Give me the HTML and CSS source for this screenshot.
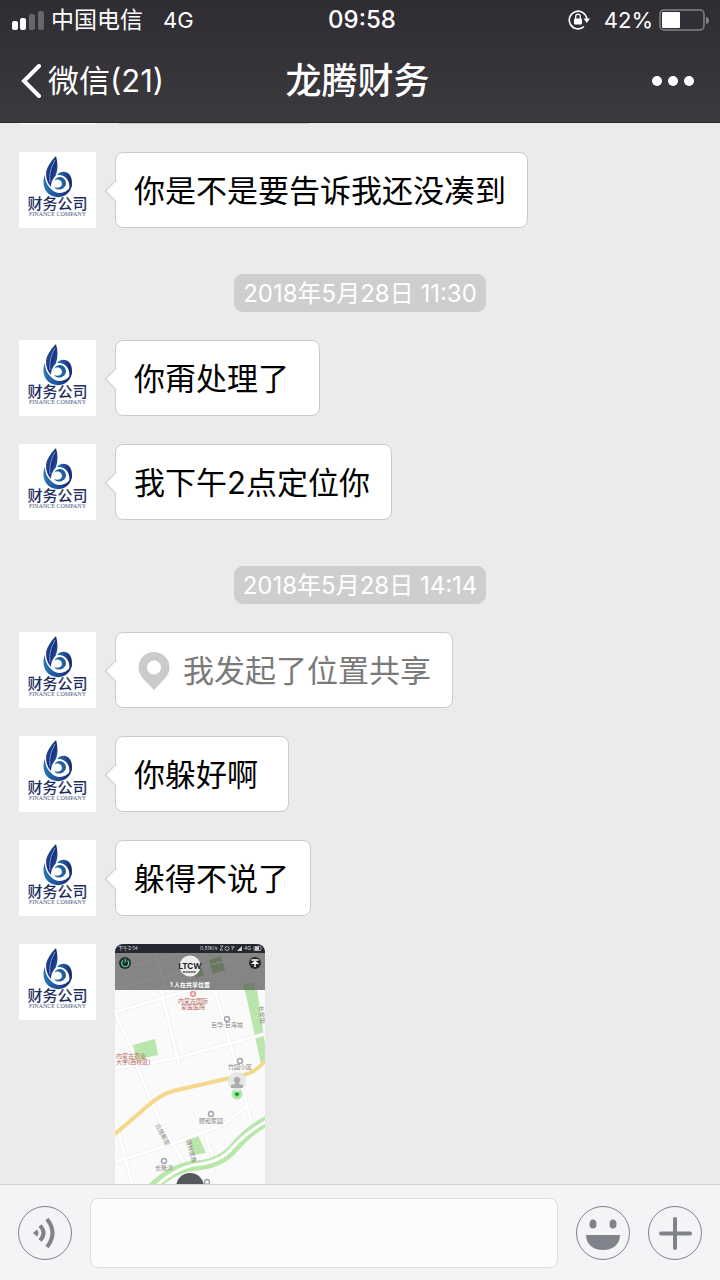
FILE: index.html
```html
<!DOCTYPE html>
<html lang="zh-CN">
<head>
<meta charset="utf-8">
<meta name="viewport" content="width=device-width, initial-scale=1">
<title>龙腾财务</title>
<link rel="stylesheet" href="styles.css">
</head>
<body>
<svg class="defs" aria-hidden="true">
  <defs>
    <linearGradient id="feather" x1="0" y1="0" x2="1" y2="1">
      <stop offset="0" stop-color="#2f62ad"/>
      <stop offset=".5" stop-color="#1b2d7c"/>
      <stop offset="1" stop-color="#2a78b5"/>
    </linearGradient>
    <linearGradient id="ring" x1="0" y1="0" x2="1" y2="0">
      <stop offset="0" stop-color="#2b77b4"/>
      <stop offset=".5" stop-color="#1f4f97"/>
      <stop offset="1" stop-color="#18236b"/>
    </linearGradient>
    <symbol id="mark" viewBox="0 0 30 42">
      <path fill="url(#feather)" d="M13 0C8 5 3 12 3 18c0 5 2 10 5 13 0-6 3-9 5-12 2-6 2-12 0-19z"/>
      <path fill="none" stroke="#6fa5d6" stroke-width="1" d="M12 4C8 12 6 18 7 26"/>
      <path fill="url(#ring)" d="M2 19C-1 25 0 36 9 40c11 4 20-3 20-13-2 9-14 14-21 6-4-4-6-8-6-14z"/>
      <path fill="url(#ring)" d="M14 19c5-6 15-4 15 8 0 4-2 6-3 7 2-8-3-16-12-15z"/>
      <path fill="#2260a3" d="M11 25c3-6 11-5 12 2 0 6-8 9-12 4 4 2 8 0 8-3 0-4-5-6-8-3z"/>
    </symbol>
  </defs>
</svg>
<div class="app">
  <header class="top">
    <div class="status">
      <div class="status-left">
        <svg class="signal" viewBox="0 0 32 20" aria-hidden="true">
          <rect x="0" y="11" width="6" height="9" rx="2" fill="#fff"/>
          <rect x="8" y="8" width="6" height="12" rx="2" fill="#fff"/>
          <rect x="17" y="4" width="6" height="16" rx="2" fill="#68676b"/>
          <rect x="26" y="1" width="6" height="19" rx="2" fill="#68676b"/>
        </svg>
        <span class="carrier">中国电信</span>
        <span class="network">4G</span>
      </div>
      <time class="clock">09:58</time>
      <div class="status-right">
        <svg class="lock" viewBox="0 0 22 20" aria-hidden="true">
          <path fill="none" stroke="#fff" stroke-width="1.600" d="M18.800 9A8.800 8.800 0 1 0 16 16.500"/>
          <path fill="#fff" d="M15.500 8.500H22L18.800 13z"/>
          <rect x="6" y="8.500" width="8" height="6" rx="1" fill="#fff"/>
          <path fill="none" stroke="#fff" stroke-width="1.300" d="M7.700 9V6.500a2.300 2.300 0 0 1 4.600 0V9"/>
        </svg>
        <span class="percent">42%</span>
        <svg class="battery" viewBox="0 0 50 22" aria-hidden="true">
          <rect x="1" y="1" width="44" height="20" rx="4" fill="none" stroke="#858488" stroke-width="1.500"/>
          <rect x="3" y="3" width="18" height="16" rx="1" fill="#fff"/>
          <path d="M47 8q3 1 3 3.500t-3 3.500z" fill="#858488"/>
        </svg>
      </div>
    </div>
    <nav class="nav">
      <a class="back" href="#chats">
        <svg class="chevron" viewBox="0 0 20 34" aria-hidden="true"><path d="M18 2 3 17l15 15" fill="none" stroke="#fff" stroke-width="4" stroke-linecap="round" stroke-linejoin="miter"/></svg>
        <span>微信(21)</span>
      </a>
      <h1 class="title">龙腾财务</h1>
      <button class="more" type="button" aria-label="更多">
        <svg viewBox="0 0 42 10" aria-hidden="true"><circle cx="5" cy="5" r="5"/><circle cx="21" cy="5" r="5"/><circle cx="37" cy="5" r="5"/></svg>
      </button>
    </nav>
  </header>

  <main class="chat">
    <div class="previous"><i class="previous-avatar"></i><i class="previous-bubble"></i></div>

    <article class="message">
      <div class="avatar"><svg class="mark"><use href="#mark"/></svg><b>财务公司</b><small>FINANCE COMPANY</small></div>
      <p class="bubble">你是不是要告诉我还没凑到</p>
    </article>

    <time class="stamp">2018年5月28日 11:30</time>

    <article class="message">
      <div class="avatar"><svg class="mark"><use href="#mark"/></svg><b>财务公司</b><small>FINANCE COMPANY</small></div>
      <p class="bubble">你甭处理了 </p>
    </article>
    <article class="message">
      <div class="avatar"><svg class="mark"><use href="#mark"/></svg><b>财务公司</b><small>FINANCE COMPANY</small></div>
      <p class="bubble">我下午2点定位你</p>
    </article>

    <time class="stamp">2018年5月28日 14:14</time>

    <article class="message">
      <div class="avatar"><svg class="mark"><use href="#mark"/></svg><b>财务公司</b><small>FINANCE COMPANY</small></div>
      <p class="bubble location"><svg class="pin" viewBox="0 0 32 38" aria-hidden="true"><path fill="#cbcbcb" fill-rule="evenodd" d="M16 0a15.500 15.500 0 0 1 15.500 15.500C31.500 25 22 31 16 38 10 31 .5 25 .5 15.500A15.500 15.500 0 0 1 16 0zm0 8.500a7 7 0 1 0 0 14 7 7 0 0 0 0-14z"/></svg>我发起了位置共享</p>
    </article>
    <article class="message">
      <div class="avatar"><svg class="mark"><use href="#mark"/></svg><b>财务公司</b><small>FINANCE COMPANY</small></div>
      <p class="bubble">你躲好啊 </p>
    </article>
    <article class="message">
      <div class="avatar"><svg class="mark"><use href="#mark"/></svg><b>财务公司</b><small>FINANCE COMPANY</small></div>
      <p class="bubble">躲得不说了</p>
    </article>
    <article class="message">
      <div class="avatar"><svg class="mark"><use href="#mark"/></svg><b>财务公司</b><small>FINANCE COMPANY</small></div>
      <svg class="map" viewBox="0 0 150 267" role="img" aria-label="位置共享地图">
        <rect width="150" height="267" fill="#fafafa"/>
        <g fill="#b9e6ab">
          <path d="M18 101l22-6 3 16-22 5zM129 42l12-4 9 62v20h-4zM75 193l8-2 8 18-12 2-4-9z"/>
        </g>
        <g fill="none" stroke="#e9e9ea" stroke-width="4">
          <path d="M0 68l150-44M0 124q50-6 83-16l67-18M-2 64 18 108M20 118 46 180 76 230M0 175 24 267M0 218 60 199 110 180 132 162M95 30l23 80 18 66M46 46l18 74M90 190l12 36"/>
        </g>
        <g fill="none" stroke="#fff" stroke-width="3">
          <path d="M0 68l150-44M0 124q50-6 83-16l67-18M-2 64 18 108M20 118 46 180 76 230M0 175 24 267M0 218 60 199 110 180 132 162M95 30l23 80 18 66M46 46l18 74M90 190l12 36"/>
        </g>
        <path d="M34 247Q54 226 76 222q28-1 42-17 16-19 34-28" fill="none" stroke="#b9e6ab" stroke-width="10"/>
        <path d="M34 249Q56 226 78 221q28-2 40-18 14-15 34-26" fill="none" stroke="#fff" stroke-width="3"/>
        <path d="M0 190 28 166q16-15 30-19l70-16q12-2 22-14" fill="none" stroke="#f4d88c" stroke-width="4"/>
        <g fill="#fff" stroke="#a1a4b2" stroke-width="1.500"><circle cx="112" cy="75" r="2.500"/><circle cx="125" cy="117" r="2.500"/><circle cx="96" cy="170" r="2.500"/><circle cx="49" cy="217" r="2.500"/><circle cx="92" cy="238" r="2.500"/></g>
        <circle cx="78" cy="50" r="3" fill="#df8580"/><path d="M76 50h4M78 48v4" stroke="#fff"/>
        <g class="map-red"><text x="78" y="59" text-anchor="middle">内蒙古国际</text><text x="78" y="65" text-anchor="middle">蒙医医院</text><text x="1" y="114">内蒙古农业</text><text x="1" y="120">大学(西校区)</text></g>
        <g class="map-place"><text x="112" y="83" text-anchor="middle">巨华·巨海城</text><text x="125" y="125" text-anchor="middle">竹园小区</text><text x="96" y="179" text-anchor="middle">颐和家园</text><text x="49" y="226" text-anchor="middle">长隆湾</text><text transform="translate(40 181) rotate(62)">云居新街</text><text transform="translate(71 196) rotate(75)">锡林南路</text><text transform="translate(144 62) rotate(85)">长安街</text></g>
        <circle cx="122" cy="150" r="5.500" fill="#a9eba5"/><path d="M122 153l-2.500-3 1-1.500h3l1 1.500z" fill="#159d28"/>
        <path d="M122 148l-4-3a9 9 0 1 1 8 0z" fill="#e7e7e7"/>
        <path d="M122 133a3 3 0 0 1 2 5.500v1.500l4 1v3h-12v-3l4-1v-1.500a3 3 0 0 1 2-5.500z" fill="#ababab"/>
        <circle cx="75" cy="243" r="14" fill="#55585c"/>
        <path d="M0 8h150v38H0z" fill="#858585"/>
        <path d="M94 16l12-4 4 14-12 4zM78 25l8-3 3 9-8 3z" fill="#68795f"/><path d="M128 41l12-3v8h-11z" fill="#71816b"/>
        <path d="M0 26 70 8M0 45l150-38M40 9l12 37" stroke="#8d8d8d" stroke-width="1"/>
        <path d="M0 0h150v9H0z" fill="#252833"/>
        <g class="map-status"><text x="3" y="6">下午2:14</text><text x="85" y="6">0.51K/s</text><text x="129" y="6">4G</text></g>
        <g fill="none" stroke="#ccc" stroke-width=".8"><path d="M105 2h3l-3 4h3"/><circle cx="112" cy="4.500" r="2"/><path d="M117 6l2-4M116 3h3"/><rect x="139" y="2.500" width="7" height="4" rx="1"/><path d="M140 4.500h4" stroke-width="3"/></g><path d="M122 7l5-5v5z" fill="#ccc"/>
        <circle cx="10" cy="19" r="6" fill="#252927"/><path d="M8 16.500a3.500 3.500 0 1 0 4.500 0M10.200 14.500v4" fill="none" stroke="#48c89c" stroke-width="1.300"/>
        <circle cx="140" cy="19" r="6" fill="#292929"/><path d="M136.500 16h7M140 23v-4" stroke="#fff" stroke-width="1.500"/><path d="M136 20l4-3.500 4 3.500z" fill="#fff"/>
        <circle cx="75" cy="22" r="10.500" fill="#eee"/><text class="badge" x="75" y="25" text-anchor="middle">LTCW</text><path d="M68 28h13" stroke="#444" stroke-width="1.500" stroke-dasharray="2 .6"/>
        <text class="map-title" x="75" y="43" text-anchor="middle">1 人在共享位置</text>
      </svg>
    </article>
  </main>

  <form class="composer">
    <button class="round" type="button" aria-label="语音">
      <svg viewBox="0 0 54 54" aria-hidden="true"><circle cx="27" cy="27" r="26.500" fill="none" stroke="#7f8187"/><path d="M15 27l4-3.500q3 3.500 0 7z" fill="#808389"/><path d="M22 19.500q7 7.500 0 15M29 13q11 14 0 28" fill="none" stroke="#808389" stroke-width="4"/></svg>
    </button>
    <input class="entry" type="text" aria-label="消息">
    <button class="round" type="button" aria-label="表情">
      <svg viewBox="0 0 54 54" aria-hidden="true"><circle cx="27" cy="27" r="26.500" fill="none" stroke="#7f8187"/><g fill="#808389"><ellipse cx="17" cy="18" rx="3.500" ry="4.500"/><ellipse cx="37" cy="18" rx="3.500" ry="4.500"/><path d="M10 29h34c0 9-7 15-17 15s-17-6-17-15z"/></g></svg>
    </button>
    <button class="round" type="button" aria-label="更多功能">
      <svg viewBox="0 0 54 54" aria-hidden="true"><circle cx="27" cy="27" r="26.500" fill="none" stroke="#7f8187"/><path d="M27 13v29M13 27.500h29" stroke="#808389" stroke-width="4" stroke-linecap="round"/></svg>
    </button>
  </form>
</div>
</body>
</html>
```
FILE: styles.css
```css
* {
  box-sizing: border-box;
}

body {
  margin: 0;
  font-family: Inter, "Noto Sans CJK SC", sans-serif;
  color: #000;
}

button {
  padding: 0;
  border: 0;
  background: none;
}

svg {
  display: block;
  flex: none;
}

.defs {
  position: absolute;
  width: 0;
  height: 0;
}

.app {
  display: flex;
  flex-direction: column;
  height: 100vh;
  background: #ebebeb;
}

.top {
  flex: none;
  color: #fff;
  background: linear-gradient(#2f2c33, #3b3a3e);
  border-bottom: 1px solid #29282b;
}

.status {
  display: grid;
  grid-template-columns: 1fr auto 1fr;
  align-items: center;
  height: 40px;
  padding: 0 11px 0 12px;
  font-size: 22px;
  line-height: 30px;
}

.status-left,
.status-right {
  display: flex;
  align-items: center;
}

.status-right {
  justify-content: flex-end;
}

.signal {
  width: 32px;
  height: 20px;
  margin-right: 7px;
}

.carrier {
  margin-right: 20px;
  font-size: 23px;
}

.network,
.percent {
  font-size: 22px;
}

.clock {
  padding-left: 3px;
  font-size: 24px;
  font-weight: 500;
}

.lock {
  width: 22px;
  height: 20px;
  margin-right: 14px;
}

.percent {
  margin-right: 6px;
}

.battery {
  width: 50px;
  height: 22px;
}

.nav {
  display: grid;
  grid-template-columns: 1fr auto 1fr;
  align-items: center;
  height: 82px;
  padding: 0 26px 0 21px;
}

.back {
  display: flex;
  align-items: center;
  gap: 7px;
  color: #fff;
  font-size: 31px;
  line-height: 40px;
  text-decoration: none;
}

.chevron {
  width: 20px;
  height: 34px;
}

.title {
  margin: 0;
  font-size: 36px;
  font-weight: 500;
  line-height: 44px;
}

.more {
  justify-self: end;
}

.more svg {
  width: 42px;
  height: 10px;
  fill: #fff;
}

.chat {
  display: flex;
  flex: 1;
  flex-direction: column;
  gap: 28px;
  min-height: 0;
  padding: 0 19px;
  overflow: hidden;
}

.previous {
  display: flex;
  flex: none;
  gap: 23px;
  height: 1px;
}

.previous-avatar {
  width: 77px;
  background: #fff;
}

.previous-bubble {
  width: 190px;
  background: #ccc;
}

.message {
  display: flex;
  flex: none;
  align-items: flex-start;
  gap: 19px;
  height: 76px;
}

.avatar {
  display: flex;
  flex: none;
  flex-direction: column;
  align-items: center;
  width: 77px;
  height: 76px;
  padding-top: 4px;
  overflow: hidden;
  background: #fff;
}

.mark {
  width: 30px;
  height: 42px;
}

.avatar b {
  color: #1d2f63;
  font-size: 15px;
  font-weight: 500;
  line-height: 12px;
  white-space: nowrap;
}

.avatar small {
  color: #4d5980;
  font-family: "Liberation Serif", serif;
  font-size: 6px;
  line-height: 8px;
  white-space: nowrap;
}

.bubble {
  position: relative;
  display: flex;
  align-items: center;
  height: 76px;
  margin: 0;
  padding: 2px 21px 0 18px;
  background: #fff;
  border: 1px solid #cbcbcb;
  border-radius: 8px;
  font-size: 31px;
  line-height: 44px;
  white-space: pre;
}

.bubble::before {
  position: absolute;
  top: 30px;
  left: -8px;
  width: 15px;
  height: 15px;
  background: #fff;
  border: solid #cbcbcb;
  border-width: 0 0 1px 1px;
  content: "";
  transform: rotate(45deg);
}

.location {
  gap: 13px;
  padding-left: 22px;
  color: #7a7a7a;
}

.pin {
  width: 32px;
  height: 38px;
}

.stamp {
  flex: none;
  align-self: center;
  height: 38px;
  margin-top: 18px;
  padding: 1px 9px 0;
  color: #fff;
  background: #cecece;
  border-radius: 9px;
  font-size: 24px;
  line-height: 38px;
}

.map {
  width: 150px;
  height: 267px;
  border-radius: 8px;
}

.map text {
  font-size: 6px;
}

.map-red {
  fill: #b9665e;
}

.map-place {
  fill: #88827c;
}

.map-status {
  fill: #ddd;
}

.map .map-status text {
  font-size: 5px;
}

.map .badge {
  fill: #222;
  font-size: 8px;
  font-weight: 700;
}

.map .map-title {
  fill: #fff;
  font-weight: 700;
}

.composer {
  display: flex;
  flex: none;
  align-items: center;
  gap: 18px;
  padding: 13px 18px 12px;
  background: #f4f4f6;
  border-top: 1px solid #d3d3d5;
}

.round {
  flex: none;
  width: 54px;
  height: 54px;
}

.round svg {
  width: 54px;
  height: 54px;
}

.entry {
  flex: 1;
  min-width: 0;
  height: 70px;
  padding: 0 16px;
  background: #fcfcfc;
  border: 1px solid #dedee0;
  border-radius: 8px;
  font: inherit;
  font-size: 31px;
}
```
